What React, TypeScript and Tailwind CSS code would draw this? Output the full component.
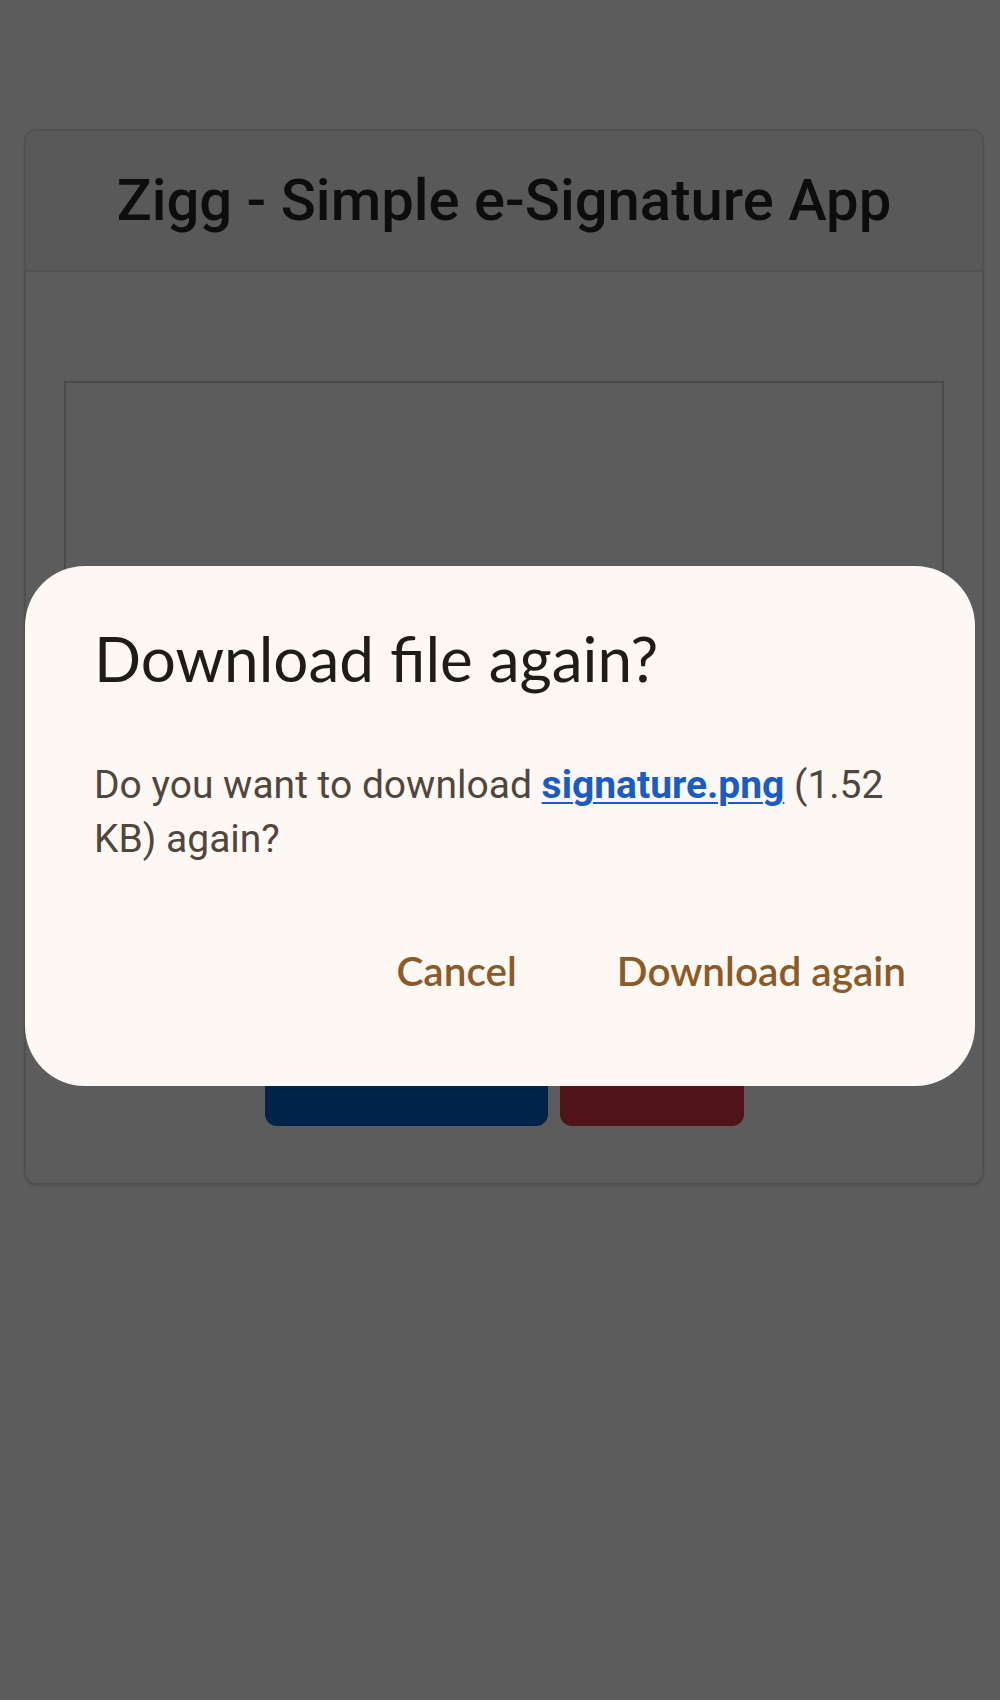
import React from "react";

const SignatureCard = () => {
  return (
    <div className="pt-[129px] pl-[24px]">
      <div className="w-[960px] rounded-[12px] border-2 border-[#dfdfdf] bg-white shadow-sm overflow-hidden">
        <div className="h-[141px] bg-[#f7f7f7] border-b-2 border-[#dfdfdf] flex items-center justify-center">
          <h1 className="text-[58px] font-medium text-[#212529] font-['Roboto',sans-serif]">
            Zigg - Simple e-Signature App
          </h1>
        </div>
        <div className="px-[38px] pt-[109px] pb-[57px]">
          <div className="h-[580px] border-2 border-[#cccccc] bg-white"></div>
          <div className="mt-[57px] flex justify-center gap-[12px]">
            <button className="w-[283px] h-[108px] rounded-[12px] bg-[#0062cc] text-white text-[40px] font-['Roboto',sans-serif]">
              Download
            </button>
            <button className="w-[184px] h-[108px] rounded-[12px] bg-[#dc3545] text-white text-[40px] font-['Roboto',sans-serif]">
              Clear
            </button>
          </div>
        </div>
      </div>
    </div>
  );
};

const DownloadDialog = () => {
  return (
    <div className="fixed inset-0 bg-black/64 flex justify-center items-start pt-[566px]">
      <div className="w-[950px] h-[520px] rounded-[60px] bg-[#fef8f4] pl-[69px] pr-[64px] pt-[52px]">
        <h2 className="text-[62px] leading-[1.3] text-[#1f1b17] font-['Lato',sans-serif]">
          Download file again?
        </h2>
        <p className="mt-[59px] text-[39px] leading-[54px] text-[#51463d] font-['Roboto',sans-serif]">
          Do you want to download{" "}
          <a className="text-[#1a5cc6] font-bold underline decoration-2 underline-offset-4">signature.png</a>{" "}
          (1.52 KB) again?
        </p>
        <div className="mt-[81px] flex justify-end gap-[100px] pr-[5px] text-[40.5px] leading-[1.2] font-semibold text-[#8b5a27] font-['Lato',sans-serif]">
          <span>Cancel</span>
          <span>Download again</span>
        </div>
      </div>
    </div>
  );
};

export default function App() {
  return (
    <div className="relative min-h-[1700px] bg-white">
      <SignatureCard />
      <DownloadDialog />
    </div>
  );
}
